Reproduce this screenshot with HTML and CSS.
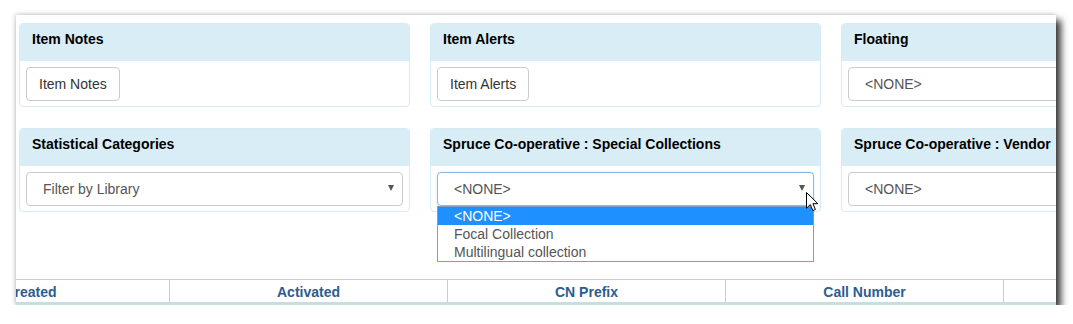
FILE: index.html
```html
<!DOCTYPE html>
<html>
<head>
<meta charset="utf-8">
<link rel="stylesheet" href="styles.css">
</head>
<body>
<div class="frame">
  <div class="panels">
    <div class="panel">
      <div class="panel-heading">Item Notes</div>
      <div class="panel-body"><button class="btn">Item Notes</button></div>
    </div>
    <div class="panel">
      <div class="panel-heading">Item Alerts</div>
      <div class="panel-body"><button class="btn">Item Alerts</button></div>
    </div>
    <div class="panel">
      <div class="panel-heading">Floating</div>
      <div class="panel-body"><div class="select"><span class="select-text">&lt;NONE&gt;</span><span class="caret"></span></div></div>
    </div>
    <div class="panel">
      <div class="panel-heading">Statistical Categories</div>
      <div class="panel-body"><div class="select"><span class="select-text">Filter by Library</span><span class="caret"></span></div></div>
    </div>
    <div class="panel">
      <div class="panel-heading">Spruce Co-operative : Special Collections</div>
      <div class="panel-body">
        <div class="select-wrap">
          <div class="select focus"><span class="select-text">&lt;NONE&gt;</span><span class="caret"></span></div>
          <ul class="dropdown">
            <li class="selected">&lt;NONE&gt;</li>
            <li>Focal Collection</li>
            <li>Multilingual collection</li>
          </ul>
          <svg class="cursor" width="13" height="20" viewBox="0 0 13 20"><path d="M0.5 0.5 L0.5 16.2 L4.3 12.6 L6.9 18.6 L9.4 17.5 L6.9 11.7 L11.9 11.7 Z" fill="#fff" stroke="#000" stroke-width="1" stroke-linejoin="round"/></svg>
        </div>
      </div>
    </div>
    <div class="panel">
      <div class="panel-heading">Spruce Co-operative : Vendor</div>
      <div class="panel-body"><div class="select"><span class="select-text">&lt;NONE&gt;</span><span class="caret"></span></div></div>
    </div>
  </div>
  <div class="table-head">
    <div class="th">Created</div>
    <div class="th">Activated</div>
    <div class="th">CN Prefix</div>
    <div class="th">Call Number</div>
    <div class="th"></div>
  </div>
  <div class="stripe"></div>
</div>
</body>
</html>
```

FILE: styles.css
```css
html, body {
  margin: 0;
  padding: 0;
  background: #fff;
}
body {
  font-family: "Liberation Sans", Arial, sans-serif;
  font-size: 14px;
  color: #333;
}
.frame {
  margin: 15px 0 0 16px;
  width: 1040px;
  height: 290px;
  background: #fff;
  overflow: hidden;
  box-shadow: 5px 5px 7px 0 rgba(0, 0, 0, 0.78), -1px -1px 4px rgba(0, 0, 0, 0.18);
}
.panels {
  display: grid;
  grid-template-columns: repeat(3, 391px);
  column-gap: 20px;
  row-gap: 21px;
  padding: 8px 0 0 3px;
}
.panel {
  border: 1px solid #d6ebf5;
  border-radius: 4px;
  background: #fff;
}
.panel-heading {
  background: #d9edf7;
  border-radius: 3px 3px 0 0;
  padding: 7px 12px 13px;
  height: 17px;
  line-height: 17px;
  font-weight: bold;
  color: #000;
  white-space: nowrap;
}
.panel-body {
  padding: 6px 6px 5px;
  height: 34px;
}
.btn {
  font-family: "Liberation Sans", Arial, sans-serif;
  font-size: 14px;
  color: #333;
  background: #fff;
  border: 1px solid #ccc;
  border-radius: 4px;
  height: 34px;
  padding: 0 12px;
  margin: 0;
  line-height: 20px;
}
.select {
  box-sizing: border-box;
  height: 34px;
  border: 1px solid #ccc;
  border-radius: 4px;
  display: flex;
  align-items: center;
  padding: 0 8px 0 16px;
  color: #555;
  background: #fff;
}
.select.focus {
  border-color: #8bb9e6;
  box-shadow: 0 0 2px rgba(102, 175, 233, 0.4);
}
.select-text {
  flex: 1;
  white-space: nowrap;
}
.caret {
  width: 0;
  height: 0;
  border-top: 6px solid #555;
  border-left: 3.5px solid transparent;
  border-right: 3.5px solid transparent;
  margin-top: -2px;
}
.select-wrap {
  position: relative;
}
.dropdown {
  position: absolute;
  left: 0;
  right: 0;
  top: 34px;
  margin: 0;
  padding: 0;
  list-style: none;
  background: #fff;
  border: 1px solid #7f9cc8;
  z-index: 5;
}
.dropdown li {
  height: 18px;
  line-height: 18px;
  padding-left: 16px;
  color: #555;
}
.dropdown li.selected {
  background: #1e90ff;
  color: #fff;
}
.cursor {
  position: absolute;
  left: 369px;
  top: 20px;
  z-index: 6;
}
.table-head {
  margin-top: 67px;
  border-top: 1px solid #ccc;
  display: flex;
  margin-left: -124px;
  height: 22px;
}
.th {
  flex: 0 0 277px;
  border-right: 1px solid #ccc;
  text-align: center;
  line-height: 24px;
  font-weight: bold;
  color: #2b5d91;
  white-space: nowrap;
}
.stripe {
  height: 3px;
  background: #c7dde0;
}
```
